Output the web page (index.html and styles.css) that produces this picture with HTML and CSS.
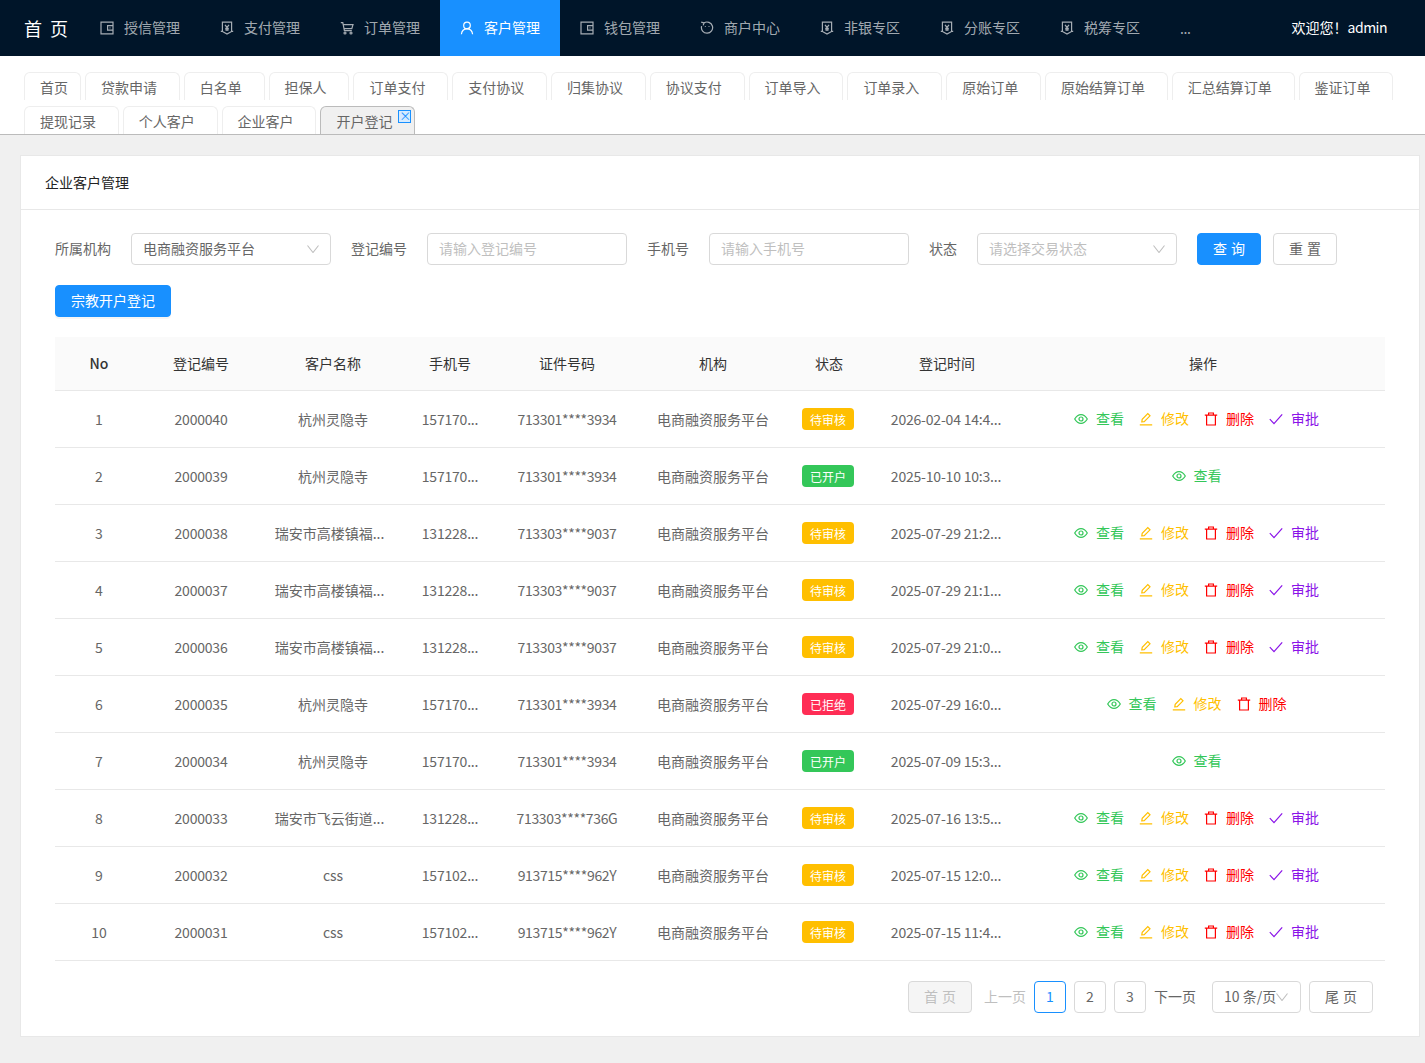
FILE: index.html
```html
<!DOCTYPE html>
<html lang="en">

<head>
  <meta charset="UTF-8" />
  <meta name="viewport" content="width=device-width, initial-scale=1.0" />
  <title>企业客户管理</title>
  <link rel="stylesheet" href="styles.css">
</head>

<body>
  <!-- icon set -->
  <svg class="defs" width="0" height="0">
    <symbol id="i-wallet" viewBox="0 0 14 14">
      <path d="M1 1.2H13V12.8H1ZM13 4.6H7.6V9.2H13M9.6 6.9H10.4" />
    </symbol>
    <symbol id="i-money" viewBox="0 0 14 14">
      <path d="M2.4 1.2H11.6V10.4L7 13 2.4 10.4ZM.8 10.4H2.4M11.6 10.4H13.2M5 3.8 7 6.4 9 3.8M7 6.4V10M5.2 7.4H8.8M5.2 8.9H8.8" />
    </symbol>
    <symbol id="i-cart" viewBox="0 0 14 14">
      <path d="M.8 1.6H2.8L4.4 9.6H11.8M3.3 3.6H13L11.8 7.6H4" />
      <circle cx="5" cy="12" r="1" />
      <circle cx="11" cy="12" r="1" />
    </symbol>
    <symbol id="i-user" viewBox="0 0 14 14">
      <circle cx="7" cy="4.4" r="3.3" />
      <path d="M1.4 13.2C1.8 9.8 4.2 7.8 7 7.8S12.2 9.8 12.6 13.2" />
    </symbol>
    <symbol id="i-face" viewBox="0 0 14 14">
      <path d="M4 1.9A5.6 5.6 0 1 1 1.6 5.2M1.2 1.2 4 1.9 3.2 4.4M5.4 5.2V6M9 5.2V6" />
    </symbol>
    <symbol id="i-eye" viewBox="0 0 14 14">
      <path d="M.7 7C2.6 3.7 4.6 2.6 7 2.6S11.4 3.7 13.3 7C11.4 10.3 9.4 11.4 7 11.4S2.6 10.3 .7 7Z" />
      <circle cx="7" cy="7" r="2" />
    </symbol>
    <symbol id="i-edit" viewBox="0 0 14 14">
      <path d="M2.8 9.8 3.2 7.4 8.8 1.6 11 3.8 5.2 9.6ZM.8 12.8H13.2" />
    </symbol>
    <symbol id="i-trash" viewBox="0 0 14 14">
      <path d="M.8 3.2H13.2M2.6 3.2V13H11.4V3.2M4.6 3.2V1H9.4V3.2" />
    </symbol>
    <symbol id="i-check" viewBox="0 0 14 14">
      <path d="M.8 7.2 5 11.6 13.2 2.4" />
    </symbol>
    <symbol id="i-down" viewBox="0 0 12 8">
      <path d="M.5 .5 6 7.5 11.5 .5" />
    </symbol>
  </svg>

  <header class="topbar">
    <div class="logo">首 页</div>
    <nav class="nav">
      <a class="nav-item"><svg class="icon"><use href="#i-wallet" /></svg>授信管理</a>
      <a class="nav-item"><svg class="icon"><use href="#i-money" /></svg>支付管理</a>
      <a class="nav-item"><svg class="icon"><use href="#i-cart" /></svg>订单管理</a>
      <a class="nav-item active"><svg class="icon"><use href="#i-user" /></svg>客户管理</a>
      <a class="nav-item"><svg class="icon"><use href="#i-wallet" /></svg>钱包管理</a>
      <a class="nav-item"><svg class="icon"><use href="#i-face" /></svg>商户中心</a>
      <a class="nav-item"><svg class="icon"><use href="#i-money" /></svg>非银专区</a>
      <a class="nav-item"><svg class="icon"><use href="#i-money" /></svg>分账专区</a>
      <a class="nav-item"><svg class="icon"><use href="#i-money" /></svg>税筹专区</a>
      <a class="nav-more">...</a>
    </nav>
    <div class="welcome">欢迎您！<span class="welcome-name">admin</span></div>
  </header>

  <div class="tabs">
    <a class="tab tab-home">首页</a>
    <a class="tab">贷款申请</a>
    <a class="tab">白名单</a>
    <a class="tab">担保人</a>
    <a class="tab">订单支付</a>
    <a class="tab">支付协议</a>
    <a class="tab">归集协议</a>
    <a class="tab">协议支付</a>
    <a class="tab">订单导入</a>
    <a class="tab">订单录入</a>
    <a class="tab">原始订单</a>
    <a class="tab">原始结算订单</a>
    <a class="tab">汇总结算订单</a>
    <a class="tab">鉴证订单</a>
    <a class="tab">提现记录</a>
    <a class="tab">个人客户</a>
    <a class="tab">企业客户</a>
    <a class="tab tab-active">开户登记<span class="tab-close">×</span></a>
  </div>

  <main class="main">
    <section class="card">
      <div class="card-head">企业客户管理</div>
      <div class="card-body">
        <form class="filter">
          <label class="filter-label">所属机构</label>
          <div class="select"><span>电商融资服务平台</span><svg class="chevron"><use href="#i-down" /></svg></div>
          <label class="filter-label">登记编号</label>
          <input class="input" placeholder="请输入登记编号">
          <label class="filter-label">手机号</label>
          <input class="input" placeholder="请输入手机号">
          <label class="filter-label">状态</label>
          <div class="select placeholder"><span>请选择交易状态</span><svg class="chevron"><use href="#i-down" /></svg></div>
          <div class="filter-btns">
            <button type="button" class="btn btn-primary">查 询</button>
            <button type="button" class="btn">重 置</button>
          </div>
        </form>

        <button type="button" class="btn btn-primary btn-add">宗教开户登记</button>

        <table class="table">
          <colgroup>
            <col class="c-no"><col class="c-code"><col class="c-name"><col class="c-phone"><col class="c-id">
            <col class="c-org"><col class="c-state"><col class="c-time"><col>
          </colgroup>
          <thead>
            <tr>
              <th class="th-no">No</th><th>登记编号</th><th>客户名称</th><th>手机号</th><th>证件号码</th>
              <th>机构</th><th>状态</th><th>登记时间</th><th>操作</th>
            </tr>
          </thead>
          <tbody>
            <tr>
              <td>1</td><td>2000040</td><td>杭州灵隐寺</td><td>157170...</td><td>713301****3934</td><td>电商融资服务平台</td>
              <td><span class="tag tag-wait">待审核</span></td><td>2026-02-04 14:4...</td>
              <td class="ops">
                <a class="op op-view"><svg class="icon"><use href="#i-eye" /></svg>查看</a>
                <a class="op op-edit"><svg class="icon"><use href="#i-edit" /></svg>修改</a>
                <a class="op op-del"><svg class="icon"><use href="#i-trash" /></svg>删除</a>
                <a class="op op-pass"><svg class="icon"><use href="#i-check" /></svg>审批</a>
              </td>
            </tr>
            <tr>
              <td>2</td><td>2000039</td><td>杭州灵隐寺</td><td>157170...</td><td>713301****3934</td><td>电商融资服务平台</td>
              <td><span class="tag tag-ok">已开户</span></td><td>2025-10-10 10:3...</td>
              <td class="ops">
                <a class="op op-view"><svg class="icon"><use href="#i-eye" /></svg>查看</a>
              </td>
            </tr>
            <tr>
              <td>3</td><td>2000038</td><td class="cut">瑞安市高楼镇福...</td><td>131228...</td><td>713303****9037</td><td>电商融资服务平台</td>
              <td><span class="tag tag-wait">待审核</span></td><td>2025-07-29 21:2...</td>
              <td class="ops">
                <a class="op op-view"><svg class="icon"><use href="#i-eye" /></svg>查看</a>
                <a class="op op-edit"><svg class="icon"><use href="#i-edit" /></svg>修改</a>
                <a class="op op-del"><svg class="icon"><use href="#i-trash" /></svg>删除</a>
                <a class="op op-pass"><svg class="icon"><use href="#i-check" /></svg>审批</a>
              </td>
            </tr>
            <tr>
              <td>4</td><td>2000037</td><td class="cut">瑞安市高楼镇福...</td><td>131228...</td><td>713303****9037</td><td>电商融资服务平台</td>
              <td><span class="tag tag-wait">待审核</span></td><td>2025-07-29 21:1...</td>
              <td class="ops">
                <a class="op op-view"><svg class="icon"><use href="#i-eye" /></svg>查看</a>
                <a class="op op-edit"><svg class="icon"><use href="#i-edit" /></svg>修改</a>
                <a class="op op-del"><svg class="icon"><use href="#i-trash" /></svg>删除</a>
                <a class="op op-pass"><svg class="icon"><use href="#i-check" /></svg>审批</a>
              </td>
            </tr>
            <tr>
              <td>5</td><td>2000036</td><td class="cut">瑞安市高楼镇福...</td><td>131228...</td><td>713303****9037</td><td>电商融资服务平台</td>
              <td><span class="tag tag-wait">待审核</span></td><td>2025-07-29 21:0...</td>
              <td class="ops">
                <a class="op op-view"><svg class="icon"><use href="#i-eye" /></svg>查看</a>
                <a class="op op-edit"><svg class="icon"><use href="#i-edit" /></svg>修改</a>
                <a class="op op-del"><svg class="icon"><use href="#i-trash" /></svg>删除</a>
                <a class="op op-pass"><svg class="icon"><use href="#i-check" /></svg>审批</a>
              </td>
            </tr>
            <tr>
              <td>6</td><td>2000035</td><td>杭州灵隐寺</td><td>157170...</td><td>713301****3934</td><td>电商融资服务平台</td>
              <td><span class="tag tag-no">已拒绝</span></td><td>2025-07-29 16:0...</td>
              <td class="ops">
                <a class="op op-view"><svg class="icon"><use href="#i-eye" /></svg>查看</a>
                <a class="op op-edit"><svg class="icon"><use href="#i-edit" /></svg>修改</a>
                <a class="op op-del"><svg class="icon"><use href="#i-trash" /></svg>删除</a>
              </td>
            </tr>
            <tr>
              <td>7</td><td>2000034</td><td>杭州灵隐寺</td><td>157170...</td><td>713301****3934</td><td>电商融资服务平台</td>
              <td><span class="tag tag-ok">已开户</span></td><td>2025-07-09 15:3...</td>
              <td class="ops">
                <a class="op op-view"><svg class="icon"><use href="#i-eye" /></svg>查看</a>
              </td>
            </tr>
            <tr>
              <td>8</td><td>2000033</td><td class="cut">瑞安市飞云街道...</td><td>131228...</td><td>713303****736G</td><td>电商融资服务平台</td>
              <td><span class="tag tag-wait">待审核</span></td><td>2025-07-16 13:5...</td>
              <td class="ops">
                <a class="op op-view"><svg class="icon"><use href="#i-eye" /></svg>查看</a>
                <a class="op op-edit"><svg class="icon"><use href="#i-edit" /></svg>修改</a>
                <a class="op op-del"><svg class="icon"><use href="#i-trash" /></svg>删除</a>
                <a class="op op-pass"><svg class="icon"><use href="#i-check" /></svg>审批</a>
              </td>
            </tr>
            <tr>
              <td>9</td><td>2000032</td><td>css</td><td>157102...</td><td>913715****962Y</td><td>电商融资服务平台</td>
              <td><span class="tag tag-wait">待审核</span></td><td>2025-07-15 12:0...</td>
              <td class="ops">
                <a class="op op-view"><svg class="icon"><use href="#i-eye" /></svg>查看</a>
                <a class="op op-edit"><svg class="icon"><use href="#i-edit" /></svg>修改</a>
                <a class="op op-del"><svg class="icon"><use href="#i-trash" /></svg>删除</a>
                <a class="op op-pass"><svg class="icon"><use href="#i-check" /></svg>审批</a>
              </td>
            </tr>
            <tr>
              <td>10</td><td>2000031</td><td>css</td><td>157102...</td><td>913715****962Y</td><td>电商融资服务平台</td>
              <td><span class="tag tag-wait">待审核</span></td><td>2025-07-15 11:4...</td>
              <td class="ops">
                <a class="op op-view"><svg class="icon"><use href="#i-eye" /></svg>查看</a>
                <a class="op op-edit"><svg class="icon"><use href="#i-edit" /></svg>修改</a>
                <a class="op op-del"><svg class="icon"><use href="#i-trash" /></svg>删除</a>
                <a class="op op-pass"><svg class="icon"><use href="#i-check" /></svg>审批</a>
              </td>
            </tr>
          </tbody>
        </table>

        <div class="pager">
          <button type="button" class="btn btn-disabled">首 页</button>
          <span class="pager-text pager-off">上一页</span>
          <a class="page page-on">1</a>
          <a class="page">2</a>
          <a class="page">3</a>
          <span class="pager-text">下一页</span>
          <div class="page-size"><span>10 条/页</span><svg class="chevron"><use href="#i-down" /></svg></div>
          <button type="button" class="btn">尾 页</button>
        </div>
      </div>
    </section>
  </main>
</body>

</html>
```
FILE: styles.css
```css
* {
  box-sizing: border-box;
}

body {
  margin: 0;
  background: #f0f0f0;
  color: #666;
  font: 14px/22px "Noto Sans CJK SC", "Noto Sans", sans-serif;
}

.defs {
  position: absolute;
}

symbol {
  overflow: visible;
}

.icon {
  flex: none;
  width: 14px;
  height: 14px;
  margin-top: 2px;
  fill: none;
  stroke: currentColor;
  stroke-width: 1.2;
}

/* top bar */
.topbar {
  display: flex;
  align-items: center;
  height: 56px;
  padding-left: 24px;
  background: #001529;
}

.logo {
  width: 56px;
  color: #fff;
  font-size: 18px;
  word-spacing: 4px;
  white-space: nowrap;
}

.nav {
  display: flex;
  flex: 1;
  height: 100%;
}

.nav-item {
  display: flex;
  align-items: center;
  gap: 10px;
  width: 120px;
  padding: 0 0 2px 20px;
  color: rgba(255, 255, 255, .65);
}

.nav-item.active {
  background: #1890ff;
  color: #fff;
}

.nav-more {
  display: flex;
  align-items: center;
  padding-left: 20px;
  color: rgba(255, 255, 255, .65);
  letter-spacing: -.4px;
}

.welcome {
  padding: 0 38px 2px 0;
  color: #fff;
}

.welcome-name {
  letter-spacing: -.5px;
}

/* tabs */
.tabs {
  display: flex;
  flex-wrap: wrap;
  gap: 6px 4px;
  padding: 16px 0 0 24px;
  background: #fff;
  border-bottom: 1px solid #bbb;
}

.tab {
  position: relative;
  height: 28px;
  padding: 3px 21.8px 0 15px;
  border: 1px solid #eee;
  border-bottom: 0;
  border-radius: 6px 6px 0 0;
  color: #666;
  line-height: 22px;
}

.tab-home {
  padding-right: 12px;
}

.tab-active {
  background: #f0f0f0;
  border-color: #bbb;
}

.tab-close {
  position: absolute;
  top: 3px;
  right: 3px;
  width: 13px;
  height: 13px;
  background: #d6ebff;
  border: 1px solid #1890ff;
  color: #1890ff;
  font-size: 12px;
  line-height: 10px;
  text-align: center;
}

/* card */
.main {
  padding: 20px 5px 26px 20px;
}

.card {
  background: #fff;
  border: 1px solid #e8e8e8;
}

.card-head {
  height: 54px;
  padding-left: 24px;
  border-bottom: 1px solid #e8e8e8;
  color: #222;
  line-height: 53px;
}

.card-body {
  padding: 23px 34px;
}

/* filter row */
.filter {
  display: flex;
  align-items: center;
  gap: 20px;
  height: 32px;
  margin-bottom: 20px;
}

.filter-label {
  padding-bottom: 2px;
  color: #666;
}

.input,
.select {
  flex: none;
  width: 200px;
  height: 32px;
  padding: 0 11px 2px;
  border: 1px solid #d9d9d9;
  border-radius: 4px;
  background: #fff;
  color: #666;
  font: inherit;
}

.input::placeholder,
.placeholder {
  color: #bfbfbf;
}

.select {
  display: flex;
  align-items: center;
  justify-content: space-between;
}

.chevron {
  flex: none;
  width: 12px;
  height: 8px;
  margin-top: 2px;
  fill: none;
  stroke: #bfbfbf;
  stroke-width: 1.1;
}

.filter-btns {
  display: flex;
  gap: 12px;
}

.btn {
  width: 64px;
  height: 32px;
  padding: 0 0 2px;
  border: 1px solid #d9d9d9;
  border-radius: 4px;
  background: #fff;
  color: #666;
  font: inherit;
  word-spacing: 1px;
}

.btn-primary {
  border-color: #1890ff;
  background: #1890ff;
  color: #fff;
}

.btn-add {
  display: block;
  width: 116px;
  margin-bottom: 20px;
  box-shadow: 0 2px 0 rgba(0, 0, 0, .04);
}

.btn-disabled {
  background: #f5f5f5;
  color: #bfbfbf;
}

/* table */
.table {
  width: 100%;
  border-collapse: separate;
  border-spacing: 0;
  table-layout: fixed;
}

.c-no { width: 88px; }
.c-code { width: 116px; }
.c-name { width: 148px; }
.c-phone { width: 86px; }
.c-id { width: 148px; }
.c-org { width: 144px; }
.c-state { width: 88px; }
.c-time { width: 148px; }

.table th,
.table td {
  padding: 0;
  border-bottom: 1px solid #e8e8e8;
  text-align: center;
  white-space: nowrap;
}

.table thead tr {
  height: 54px;
}

.table tbody tr {
  height: 57px;
}

.table th {
  padding-bottom: 2px;
  background: #fafafa;
  color: #333;
  font-weight: 400;
}

.table .th-no {
  font-weight: 500;
}

/* digits run narrower than the CJK font's own */
.table td:nth-child(2),
.table td:nth-child(4),
.table td:nth-child(8) {
  letter-spacing: -.2px;
}

.table td:nth-child(5) {
  letter-spacing: -.35px;
}

.table td:nth-child(8) {
  padding-right: 2px;
}

.table .cut {
  padding-right: 7px;
}

.tag {
  display: inline-block;
  width: 52px;
  height: 22px;
  margin: 0 2px 2px 0;
  border-radius: 4px;
  color: #fff;
  font-size: 12px;
  line-height: 24px;
  vertical-align: middle;
}

.tag-wait { background: #ffbf00; }
.tag-ok { background: #34c759; }
.tag-no { background: #ff2d55; }

.table .ops {
  padding-left: 2px;
  font-size: 0;
}

.op {
  display: inline-flex;
  align-items: center;
  gap: 8px;
  margin-right: 15px;
  padding-bottom: 2px;
  font-size: 14px;
  vertical-align: middle;
}

.op-view { color: #34c759; }
.op-edit { color: #ffbf00; }
.op-del { color: #ff0000; }
.op-pass { color: #8a13e8; }

/* pager */
.pager {
  display: flex;
  align-items: center;
  justify-content: flex-end;
  gap: 8px;
  margin-top: 20px;
  padding-right: 12px;
}

.pager-text {
  padding-bottom: 2px;
  color: #666;
}

.pager-off {
  margin-left: 4px;
  color: #bfbfbf;
}

.page {
  width: 32px;
  height: 32px;
  border: 1px solid #d9d9d9;
  border-radius: 4px;
  line-height: 28px;
  text-align: center;
}

.page-on {
  border-color: #1890ff;
  color: #1890ff;
}

.page-size {
  display: flex;
  align-items: center;
  width: 89px;
  height: 32px;
  margin-left: 8px;
  padding: 0 0 2px 11px;
  border: 1px solid #d9d9d9;
  border-radius: 4px;
}
```
